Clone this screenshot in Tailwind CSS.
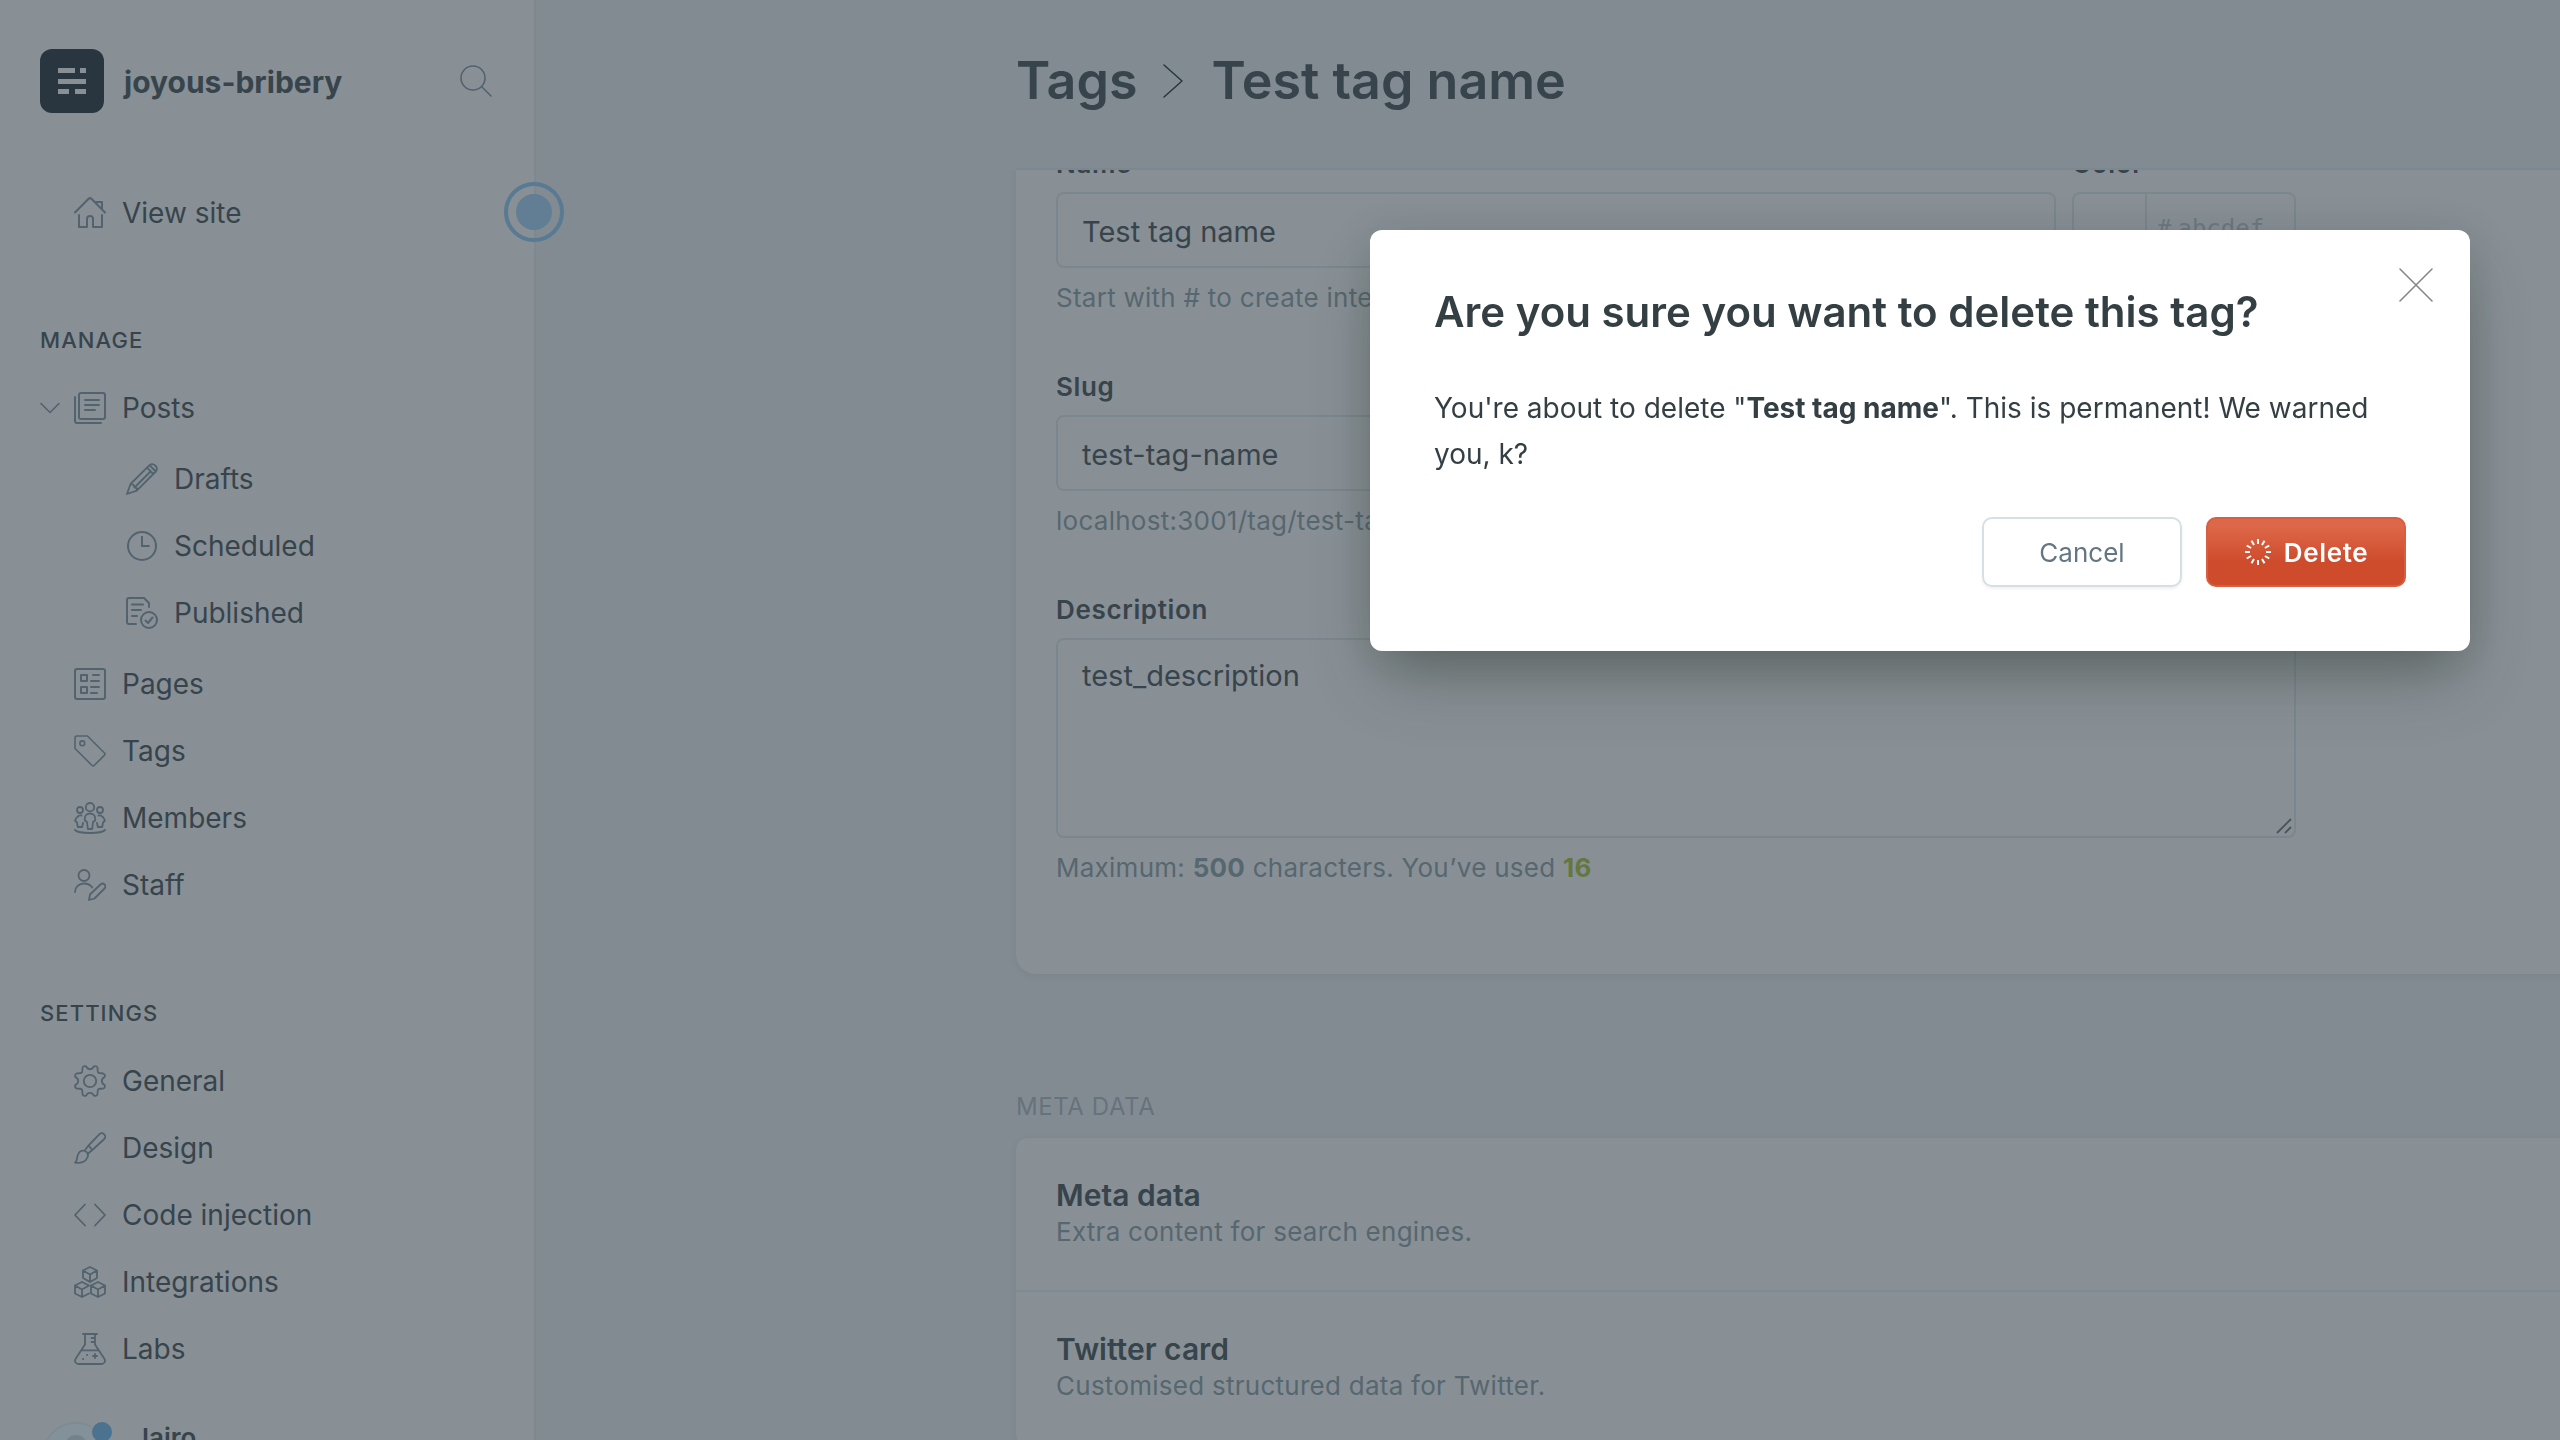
<!DOCTYPE html>
<html lang="en">
<head>
<meta charset="utf-8">
<title>Tags - joyous-bribery</title>
<script src="https://cdn.jsdelivr.net/npm/@tailwindcss/browser@4"></script>
</head>
<body class="flex h-screen overflow-hidden bg-[#838b92] font-['Inter',sans-serif] text-[28px] text-[#37444c]">

<!-- Sidebar -->
<nav class="relative flex w-[536px] shrink-0 flex-col border-r-2 border-[#7d8990] bg-[#889096]">
  <div class="flex items-center pt-[49px] pr-[42px] pl-10">
    <svg class="size-16 shrink-0" viewBox="0 0 64 64"><rect width="64" height="64" rx="12" fill="#29363f"/><path fill="#889096" d="M18 19h17v5H18zM40 19h6v5h-6zM18 30h28v5H18zM18 40h11v5H18zM35 40h11v5H35z"/></svg>
    <span class="ml-5 grow pt-0.5 text-[30px] font-bold">joyous-bribery</span>
    <button type="button" aria-label="Search" class="text-[#52636d]"><svg class="size-8" viewBox="0 0 32 32" fill="none" stroke="currentColor" stroke-width="1.6" stroke-linecap="round"><circle cx="13" cy="13" r="12"/><path d="M22 22l9 9"/></svg></button>
  </div>

  <a href="#" class="mt-[79px] flex h-[67px] items-center gap-4 pl-[74px]">
    <svg class="size-8 text-[#52636d]" viewBox="0 0 32 32" fill="none" stroke="currentColor" stroke-width="2" stroke-linecap="round" stroke-linejoin="round"><path d="M1 15.500L14.600 1.800q1.400-1.300 2.800 0L31 15.500M22 5h6v7M5 18v12h8v-8a3 3 0 0 1 6 0v8h9V18"/></svg>View site</a>

  <h2 class="mt-[90px] pl-10 text-[22px] leading-8 font-medium tracking-wider">MANAGE</h2>
  <ul class="mt-[18px]">
    <li>
      <a href="#" class="flex h-[67px] items-center pl-10">
        <svg class="mr-3.5 h-3 w-5 text-[#52636d]" viewBox="0 0 20 12" fill="none" stroke="currentColor" stroke-width="1.6" stroke-linecap="round" stroke-linejoin="round"><path d="M1 1.500l9 9 9-9"/></svg>
        <svg class="mr-4 size-8 text-[#52636d]" viewBox="0 0 32 32" fill="none" stroke="currentColor" stroke-width="2" stroke-linecap="round" stroke-linejoin="round"><rect x="5" y="1" width="26" height="26" rx="2"/><path d="M1 5v24a2 2 0 0 0 2 2h24M11 8h14M11 13h14M11 18h10"/></svg>Posts</a>
      <ul class="my-1">
        <li><a href="#" class="flex h-[67px] items-center gap-4 pl-[126px]"><svg class="size-8 text-[#52636d]" viewBox="0 0 32 32" fill="none" stroke="currentColor" stroke-width="1.800" stroke-linecap="round" stroke-linejoin="round"><path d="M1 31l3.500-10L23.500 2.200a4.500 4.500 0 0 1 6.300 6.300L10.800 27.700zM4.500 21l3 .8 1 2.700 2.500.8-.2 2.400M8.500 24.500L24.500 8.500M21 4.700l6.300 6.300M23.500 2.200l6.300 6.300"/></svg>Drafts</a></li>
        <li><a href="#" class="flex h-[67px] items-center gap-4 pl-[126px]"><svg class="size-8 text-[#52636d]" viewBox="0 0 32 32" fill="none" stroke="currentColor" stroke-width="2"><circle cx="16" cy="16" r="14"/><path d="M16 6v10h7.500"/></svg>Scheduled</a></li>
        <li><a href="#" class="flex h-[67px] items-center gap-4 pl-[126px]"><svg class="size-8 text-[#52636d]" viewBox="0 0 32 32" fill="none" stroke="currentColor" stroke-width="2" stroke-linecap="round" stroke-linejoin="round"><path d="M10 27H3a2 2 0 0 1-2-2V3a2 2 0 0 1 2-2h15l5 5v4M6 7.500h11M6 13h9M6 19h5M19.500 23.500l2.500 2.500 4.500-5.500"/><circle cx="23" cy="23" r="8"/></svg>Published</a></li>
      </ul>
    </li>
    <li><a href="#" class="flex h-[67px] items-center gap-4 pl-[74px]"><svg class="size-8 text-[#52636d]" viewBox="0 0 32 32" fill="none" stroke="currentColor" stroke-width="2" stroke-linecap="round" stroke-linejoin="round"><rect x="1" y="1" width="30" height="30" rx="2"/><path d="M7 7h6v6H7zM7 19h6v6H7zM19 7h6M17 13h8M17 19h8M17 25h6"/></svg>Pages</a></li>
    <li><a href="#" class="flex h-[67px] items-center gap-4 pl-[74px]"><svg class="size-8 text-[#52636d]" viewBox="0 0 32 32" fill="none" stroke="currentColor" stroke-width="1.600" stroke-linejoin="round"><path d="M1 3a2 2 0 0 1 2-2h10.500L30.500 18a1.500 1.500 0 0 1 0 2.100L20.200 30.500a1.500 1.500 0 0 1-2.100 0L1 13.500z"/><circle cx="8.300" cy="8.300" r="2.400"/></svg>Tags</a></li>
    <li><a href="#" class="flex h-[67px] items-center gap-4 pl-[74px]"><svg class="size-8 text-[#52636d]" viewBox="0 0 32 32" fill="none" stroke="currentColor" stroke-width="1.800" stroke-linecap="round" stroke-linejoin="round"><circle cx="16" cy="5.200" r="4.200"/><circle cx="6" cy="8" r="3"/><circle cx="26" cy="8" r="3"/><path d="M16 11.500c-3.200 0-5.200 2.200-5.200 5v2l2.200 1.500.8 7h4.400l.8-7 2.200-1.500v-2c0-2.800-2-5-5.200-5zM7.500 13.500C4 13 2.500 15 1 18.500l2 2 .8 4.500h4.400l.8-4M24.500 13.500c3.500-.5 5 1.500 6.500 5l-2 2-.8 4.500h-4.400l-.8-4M1 28c4 4 26 4 30 0"/></svg>Members</a></li>
    <li><a href="#" class="flex h-[67px] items-center gap-4 pl-[74px]"><svg class="size-8 text-[#52636d]" viewBox="0 0 32 32" fill="none" stroke="currentColor" stroke-width="1.800" stroke-linecap="round" stroke-linejoin="round"><circle cx="10" cy="6.500" r="5.500"/><path d="M1 23c0-5 4-8.500 9-8.500 3.500 0 6.500 1.500 8.300 4M15 31l1-5.500L26.500 15.500a2.800 2.800 0 0 1 4 4L20.500 29.500z"/></svg>Staff</a></li>
  </ul>

  <h2 class="mt-[79px] pl-10 text-[22px] leading-8 font-medium tracking-wider">SETTINGS</h2>
  <ul class="mt-[18px]">
    <li><a href="#" class="flex h-[67px] items-center gap-4 pl-[74px]"><svg class="size-8 text-[#52636d]" viewBox="0 0 32 32" fill="none" stroke="currentColor" stroke-width="1.800" stroke-linejoin="round"><path d="M11.900 1.300C14 5.200 18 5.200 20.100 1.300A2.500 2.500 0 0 1 23.500 2.700C23.600 8.400 23.600 8.400 29.300 8.500A2.500 2.500 0 0 1 30.700 11.900C26.800 14 26.800 18 30.700 20.100A2.500 2.500 0 0 1 29.300 23.500C23.600 23.600 23.600 23.600 23.500 29.300A2.500 2.500 0 0 1 20.100 30.700C18 26.800 14 26.800 11.900 30.700A2.500 2.500 0 0 1 8.500 29.300C8.400 23.600 8.400 23.600 2.700 23.500A2.500 2.500 0 0 1 1.300 20.100C5.200 18 5.200 14 1.300 11.900A2.500 2.500 0 0 1 2.700 8.500C8.400 8.400 8.400 8.400 8.500 2.700A2.500 2.500 0 0 1 11.900 1.300z"/><circle cx="16" cy="16" r="6.200"/></svg>General</a></li>
    <li><a href="#" class="flex h-[67px] items-center gap-4 pl-[74px]"><svg class="size-8 text-[#52636d]" viewBox="0 0 32 32" fill="none" stroke="currentColor" stroke-width="1.800" stroke-linecap="round" stroke-linejoin="round"><path d="M1 30.500c2.500-1 1.500-4.500 3-8 1.300-3.200 4.200-4.800 7-3.500 2.700 1.200 3.500 3.800 2.500 6.300C12 29.500 7 31.500 1 30.500zM10.500 18.800L14.500 13.500 25.500 2.200a3.400 3.400 0 0 1 4.800 4.800L18.300 18l-4.800 4M14.500 13.500l3.800 4.500"/></svg>Design</a></li>
    <li><a href="#" class="flex h-[67px] items-center gap-4 pl-[74px]"><svg class="size-8 text-[#52636d]" viewBox="0 0 32 32" fill="none" stroke="currentColor" stroke-width="1.800" stroke-linecap="round" stroke-linejoin="round"><path d="M11 5.500L1 16l10 10.500M21 5.500L31 16 21 26.500"/></svg>Code injection</a></li>
    <li><a href="#" class="flex h-[67px] items-center gap-4 pl-[74px]"><svg class="size-8 text-[#52636d]" viewBox="0 0 32 32" fill="none" stroke="currentColor" stroke-width="1.800" stroke-linecap="round" stroke-linejoin="round"><path d="M16 1l7 3.500v7.500l-7 4-7-4V4.500zM9 4.500l7 4 7-4M16 8.500V16M8 16l7 3.500M15 27.500l-7 3.500-7-3.500v-8L8 16M1 19.500l7 4 7-4M8 23.500V31M24 16l7 3.500v8L24 31l-7-3.500v-8zM17 19.500l7 4 7-4M24 23.500V31"/></svg>Integrations</a></li>
    <li><a href="#" class="flex h-[67px] items-center gap-4 pl-[74px]"><svg class="size-8 text-[#52636d]" viewBox="0 0 32 32" fill="none" stroke="currentColor" stroke-width="1.800" stroke-linecap="round" stroke-linejoin="round"><path d="M9 1h14M11 1v10.500L1.800 25.500C-.2 28.500 2 31 4.500 31h23c2.500 0 4.700-2.500 2.700-5.500L21 11.500V1M7 17.300h18M17.500 5H21M17.500 9H21M21 21v4M19 23h4M9 26h.2M13 22h.2"/></svg>Labs</a></li>
  </ul>

  <!-- Signed-in user -->
  <div class="mt-10 flex items-center pl-[42px]">
    <div class="relative size-[68px] shrink-0 rounded-full border-2 border-[#7f8b92] bg-[#83919a]">
      <svg class="size-full" viewBox="0 0 64 64" fill="#74828b"><circle cx="32" cy="22" r="11"/><path d="M12 54a20 20 0 0 1 40 0a31 31 0 0 1-40 0z"/></svg>
      <span class="absolute -top-1 -right-1.5 size-6 rounded-full border-2 border-[#889096] bg-[#4b728f]"></span>
    </div>
    <span class="ml-6 self-start text-[26px] leading-8 font-semibold">Jairo</span>
  </div>

  <!-- Tour marker -->
  <span class="absolute top-[182px] -right-[30px] flex size-[60px] items-center justify-center rounded-full border-4 border-[#587a93]"><span class="size-9 rounded-full bg-[#627e94]"></span></span>
</nav>

<!-- Tag editor -->
<main class="flex min-w-0 grow flex-col">
  <header class="h-[170px] shrink-0 pl-[480px]">
    <h1 class="flex h-full items-center border-b-2 border-[#7b888f] pb-1.5 text-[52px] font-semibold whitespace-nowrap"><a href="#">Tags</a>
      <svg class="mr-7 ml-[26px] h-[34px] w-5" viewBox="0 0 20 34" fill="none" stroke="#29363f" stroke-width="1.500" stroke-linecap="round" stroke-linejoin="round"><path d="M1 1l18 16L1 33"/></svg>Test tag name</h1>
  </header>

  <div class="grow overflow-hidden pl-[480px]">
    <form class="-mt-16 -mr-10 rounded-[20px] bg-[#889096] px-10 pt-[42px] pb-[90px] shadow-[0_2px_8px_rgba(0,0,0,0.05)]">
      <div class="w-[1240px]">
        <div class="grid grid-cols-[1fr_224px] gap-4">
          <div>
            <label for="name" class="block text-[26px] leading-8 font-semibold tracking-wide">Name</label>
            <input id="name" value="Test tag name" class="mt-3 block h-[76px] w-full rounded-lg border-2 border-[#7a878e] px-6 pt-0.5 text-[29px] outline-none">
            <p class="mt-3.5 text-[26px] leading-8 tracking-[0.01em] text-[#56676f]">Start with # to create internal tags</p>
          </div>
          <div>
            <label for="color" class="block text-[26px] leading-8 font-semibold tracking-wide">Color</label>
            <div class="mt-3 flex h-[76px] items-center rounded-lg border-2 border-[#7a878e]">
              <span class="h-full w-[73px] shrink-0 border-r-2 border-[#7a878e]"></span>
              <span class="pb-0.5 pl-2.5 font-['DejaVu_Sans_Mono',monospace] text-[24px] text-[#6d7981]">#</span>
              <input id="color" placeholder="abcdef" class="ml-1.5 w-[100px] pb-0.5 font-['DejaVu_Sans_Mono',monospace] text-[24px] outline-none placeholder:text-[#6d7981]">
            </div>
          </div>
        </div>
        <label for="slug" class="mt-[57px] block text-[26px] leading-8 font-semibold tracking-wide">Slug</label>
        <input id="slug" value="test-tag-name" class="mt-3 block h-[76px] w-full rounded-lg border-2 border-[#7a878e] px-6 pt-0.5 text-[29px] outline-none">
        <p class="mt-3.5 text-[26px] leading-8 tracking-[0.01em] text-[#56676f]">localhost:3001/tag/test-tag-name/</p>
        <label for="description" class="mt-[57px] block text-[26px] leading-8 font-semibold tracking-wide">Description</label>
        <div class="relative mt-3">
          <textarea id="description" class="block h-[200px] w-full resize-none rounded-lg border-2 border-[#7a878e] px-6 py-4 text-[29px] leading-10 outline-none">test_description</textarea>
          <svg class="absolute right-1 bottom-1 size-4" viewBox="0 0 16 16" stroke="#4b545b" stroke-width="1.800"><path d="M1 15L15 1M9 15l6-6"/></svg>
        </div>
        <p class="mt-3.5 text-[26px] leading-8 tracking-[0.01em] text-[#56676f]">Maximum: <b>500</b> characters. You’ve used <b class="text-[#64773f]">16</b></p>
      </div>
    </form>

    <h2 class="mt-[117px] text-[24px] leading-8 tracking-wide text-[#65737b]">META DATA</h2>
    <div class="mt-[15px] -mr-10 rounded-xl bg-[#889096] shadow-[0_2px_8px_rgba(0,0,0,0.05)]">
      <div class="h-[154px] border-b-2 border-[#7d8b92] px-10 pt-9">
        <h3 class="text-[30px] leading-[42px] font-semibold">Meta data</h3>
        <p class="text-[26px] leading-8 tracking-[0.01em] text-[#56676f]">Extra content for search engines.</p>
      </div>
      <div class="h-[154px] px-10 pt-9">
        <h3 class="text-[30px] leading-[42px] font-semibold">Twitter card</h3>
        <p class="text-[26px] leading-8 tracking-[0.01em] text-[#56676f]">Customised structured data for Twitter.</p>
      </div>
    </div>
  </div>
</main>

<!-- Delete confirmation -->
<section role="dialog" aria-modal="true" aria-labelledby="dialog-title" class="fixed top-[230px] right-[90px] w-[1100px] rounded-xl bg-white px-16 pt-14 pb-16 text-[#343f44] shadow-[0_34px_60px_-12px_rgba(50,60,50,0.45),0_6px_40px_rgba(50,60,50,0.16)]">
  <h2 id="dialog-title" class="text-[42px] leading-[52px] font-semibold">Are you sure you want to delete this tag?</h2>
  <p class="mt-[47px] text-[28px] leading-[46px]">You're about to delete "<strong>Test tag name</strong>". This is permanent! We warned you, k?</p>
  <div class="mt-10 flex justify-end gap-6">
    <button type="button" class="h-[70px] w-[200px] rounded-[10px] border-2 border-[#d5e0e5] text-[26px] text-[#637782] shadow-[0_2px_3px_rgba(0,0,0,0.06)]">Cancel</button>
    <button type="button" class="flex h-[70px] w-[200px] items-center justify-center gap-3 rounded-[10px] border-2 border-[#d85e40] bg-linear-to-b from-[#dd6849] from-10% via-[#ce4b2c] via-65% to-[#ce4b2c] text-[26px] font-semibold tracking-wide text-white">
      <svg class="size-7" viewBox="-14 -14 28 28" fill="none" stroke="currentColor" stroke-width="2"><path d="M0-8v-5M0 8v5M-8 0h-5M8 0h5M4-6.900l2.500-4.400M6.900-4l4.400-2.500M4 6.900l2.500 4.400M6.900 4l4.400 2.500M-4-6.900l-2.500-4.400M-6.900-4l-4.400-2.500M-4 6.900l-2.500 4.400M-6.900 4l-4.400 2.500"/></svg>Delete</button>
  </div>
  <button type="button" aria-label="Close" class="absolute top-[38px] right-[37px]"><svg class="size-[34px]" viewBox="0 0 34 34" fill="none" stroke="#888" stroke-width="1.600" stroke-linecap="round"><path d="M1 1l32 32M33 1L1 33"/></svg></button>
</section>
</body>
</html>
